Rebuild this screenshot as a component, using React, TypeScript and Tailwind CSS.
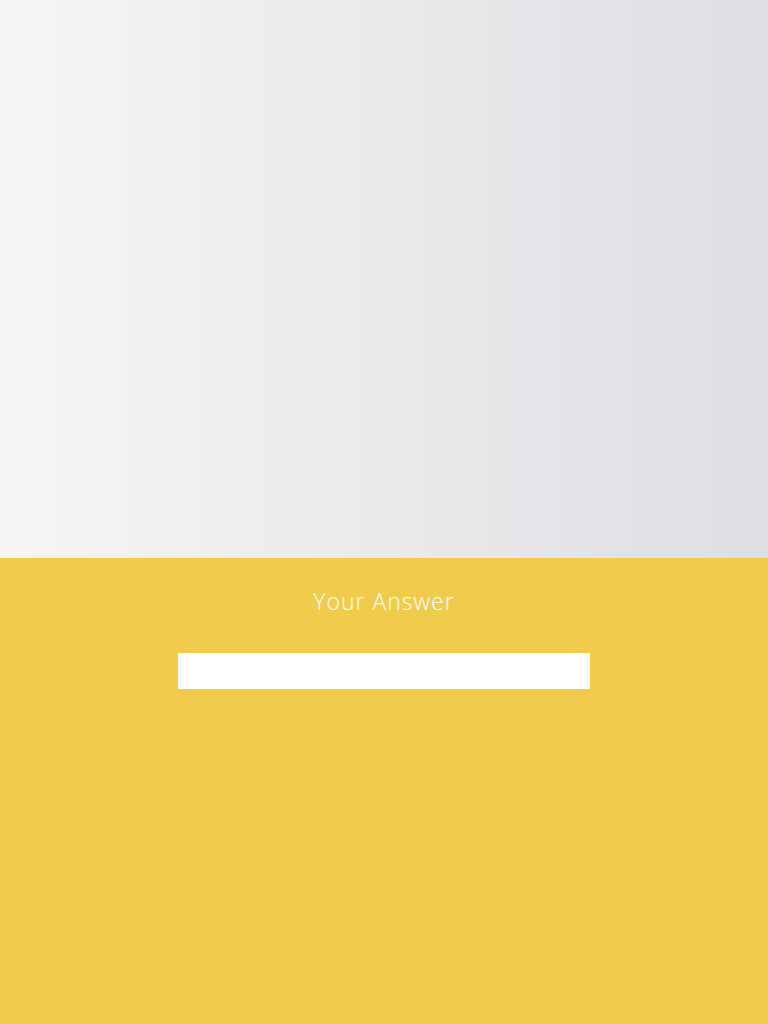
export default function App() {
  return (
    <div className="w-[768px] h-[1024px] flex flex-col" style={{ fontFamily: "'Open Sans', Lato, sans-serif" }}>
      <div className="h-[558px] bg-gradient-to-r from-[#f7f5f4] to-[#dedfe4]" />
      <div className="flex-1 bg-[#f1cb4b] flex flex-col items-center">
        <div className="mt-[28px] h-[30px] flex items-center text-white text-[23px] font-light tracking-[1px] leading-none">Your Answer</div>
        <input className="mt-[37px] w-[412px] h-[36px] bg-white outline-none border-0" />
      </div>
    </div>
  );
}
